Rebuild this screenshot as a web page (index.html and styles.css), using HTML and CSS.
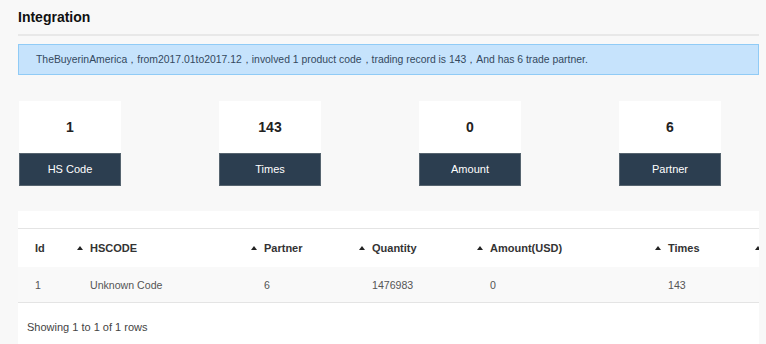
FILE: index.html
```html
<!DOCTYPE html>
<html lang="en">
<head>
    <meta charset="UTF-8">
    <title>Integration</title>
    <link rel="stylesheet" href="styles.css">
</head>
<body>
<div class="page">
    <h3 class="title">Integration</h3>
    <div class="alert">TheBuyerinAmerica，from2017.01to2017.12，involved 1 product code，trading record is 143，And has 6 trade partner.</div>

    <div class="cards">
        <div class="card">
            <div class="card-num">1</div>
            <div class="card-label">HS Code</div>
        </div>
        <div class="card">
            <div class="card-num">143</div>
            <div class="card-label">Times</div>
        </div>
        <div class="card">
            <div class="card-num">0</div>
            <div class="card-label">Amount</div>
        </div>
        <div class="card">
            <div class="card-num">6</div>
            <div class="card-label">Partner</div>
        </div>
    </div>

    <div class="table-panel">
        <div class="table-wrap">
            <table>
                <colgroup>
                    <col class="c-id">
                    <col class="c-hs">
                    <col class="c-partner">
                    <col class="c-qty">
                    <col class="c-amount">
                    <col class="c-times">
                    <col class="c-more">
                </colgroup>
                <thead>
                    <tr>
                        <th>Id</th>
                        <th class="sortable">HSCODE</th>
                        <th class="sortable">Partner</th>
                        <th class="sortable">Quantity</th>
                        <th class="sortable">Amount(USD)</th>
                        <th class="sortable">Times</th>
                        <th class="sortable"></th>
                    </tr>
                </thead>
                <tbody>
                    <tr>
                        <td>1</td>
                        <td>Unknown Code</td>
                        <td>6</td>
                        <td>1476983</td>
                        <td>0</td>
                        <td>143</td>
                        <td></td>
                    </tr>
                </tbody>
            </table>
        </div>
        <div class="pagination-info">Showing 1 to 1 of 1 rows</div>
    </div>
</div>
</body>
</html>
```

FILE: styles.css
```css
body {
    margin: 0;
    padding: 0;
    background: #f8f8f8;
    font-family: "Liberation Sans", Arial, sans-serif;
    color: #333;
}
.page {
    width: 741px;
    margin-left: 18px;
}
.title {
    margin: 0;
    padding: 9px 0 8px;
    font-size: 14px;
    line-height: 17px;
    font-weight: bold;
    color: #111;
    border-bottom: 2px solid #e8e8e8;
}
.alert {
    margin-top: 8px;
    padding: 8px 17px;
    font-size: 10.4px;
    line-height: 13px;
    color: #34495e;
    background: #c6e3fc;
    border: 1px solid #90cbf6;
}
.cards {
    display: flex;
    gap: 98px;
    margin-top: 26px;
    padding-left: 1px;
}
.card {
    width: 102px;
}
.card-num {
    height: 52px;
    line-height: 52px;
    background: #fff;
    text-align: center;
    font-size: 14px;
    font-weight: bold;
    color: #222;
}
.card-label {
    height: 31px;
    line-height: 31px;
    background: #2c3e50;
    border: 1px solid #56646f;
    text-align: center;
    font-size: 11px;
    color: #fff;
}
.table-panel {
    margin-top: 25px;
    padding-top: 17px;
    background: #fff;
    height: 140px;
}
.table-wrap {
    overflow: hidden;
}
table {
    border-collapse: collapse;
    table-layout: fixed;
    width: 873px;
    font-size: 11px;
}
.c-id { width: 55px; }
.c-hs { width: 174px; }
.c-partner { width: 108px; }
.c-qty { width: 118px; }
.c-amount { width: 178px; }
.c-times { width: 100px; }
.c-more { width: 140px; }
th {
    height: 38px;
    padding: 0 0 0 17px;
    text-align: left;
    font-weight: bold;
    color: #333;
    border-top: 1px solid #e4e4e4;
    white-space: nowrap;
}
th.sortable {
    padding-left: 4px;
}
th.sortable::before {
    content: "";
    display: inline-block;
    width: 0;
    height: 0;
    margin-right: 7px;
    vertical-align: 2px;
    border-left: 3px solid transparent;
    border-right: 3px solid transparent;
    border-bottom: 4px solid #222;
}
td {
    height: 35px;
    padding: 0 0 0 17px;
    font-size: 10.6px;
    color: #555;
    background: #f9f9f9;
    border-bottom: 1px solid #e4e4e4;
}
.pagination-info {
    padding: 18px 0 0 9px;
    font-size: 11px;
    color: #444;
}
```
